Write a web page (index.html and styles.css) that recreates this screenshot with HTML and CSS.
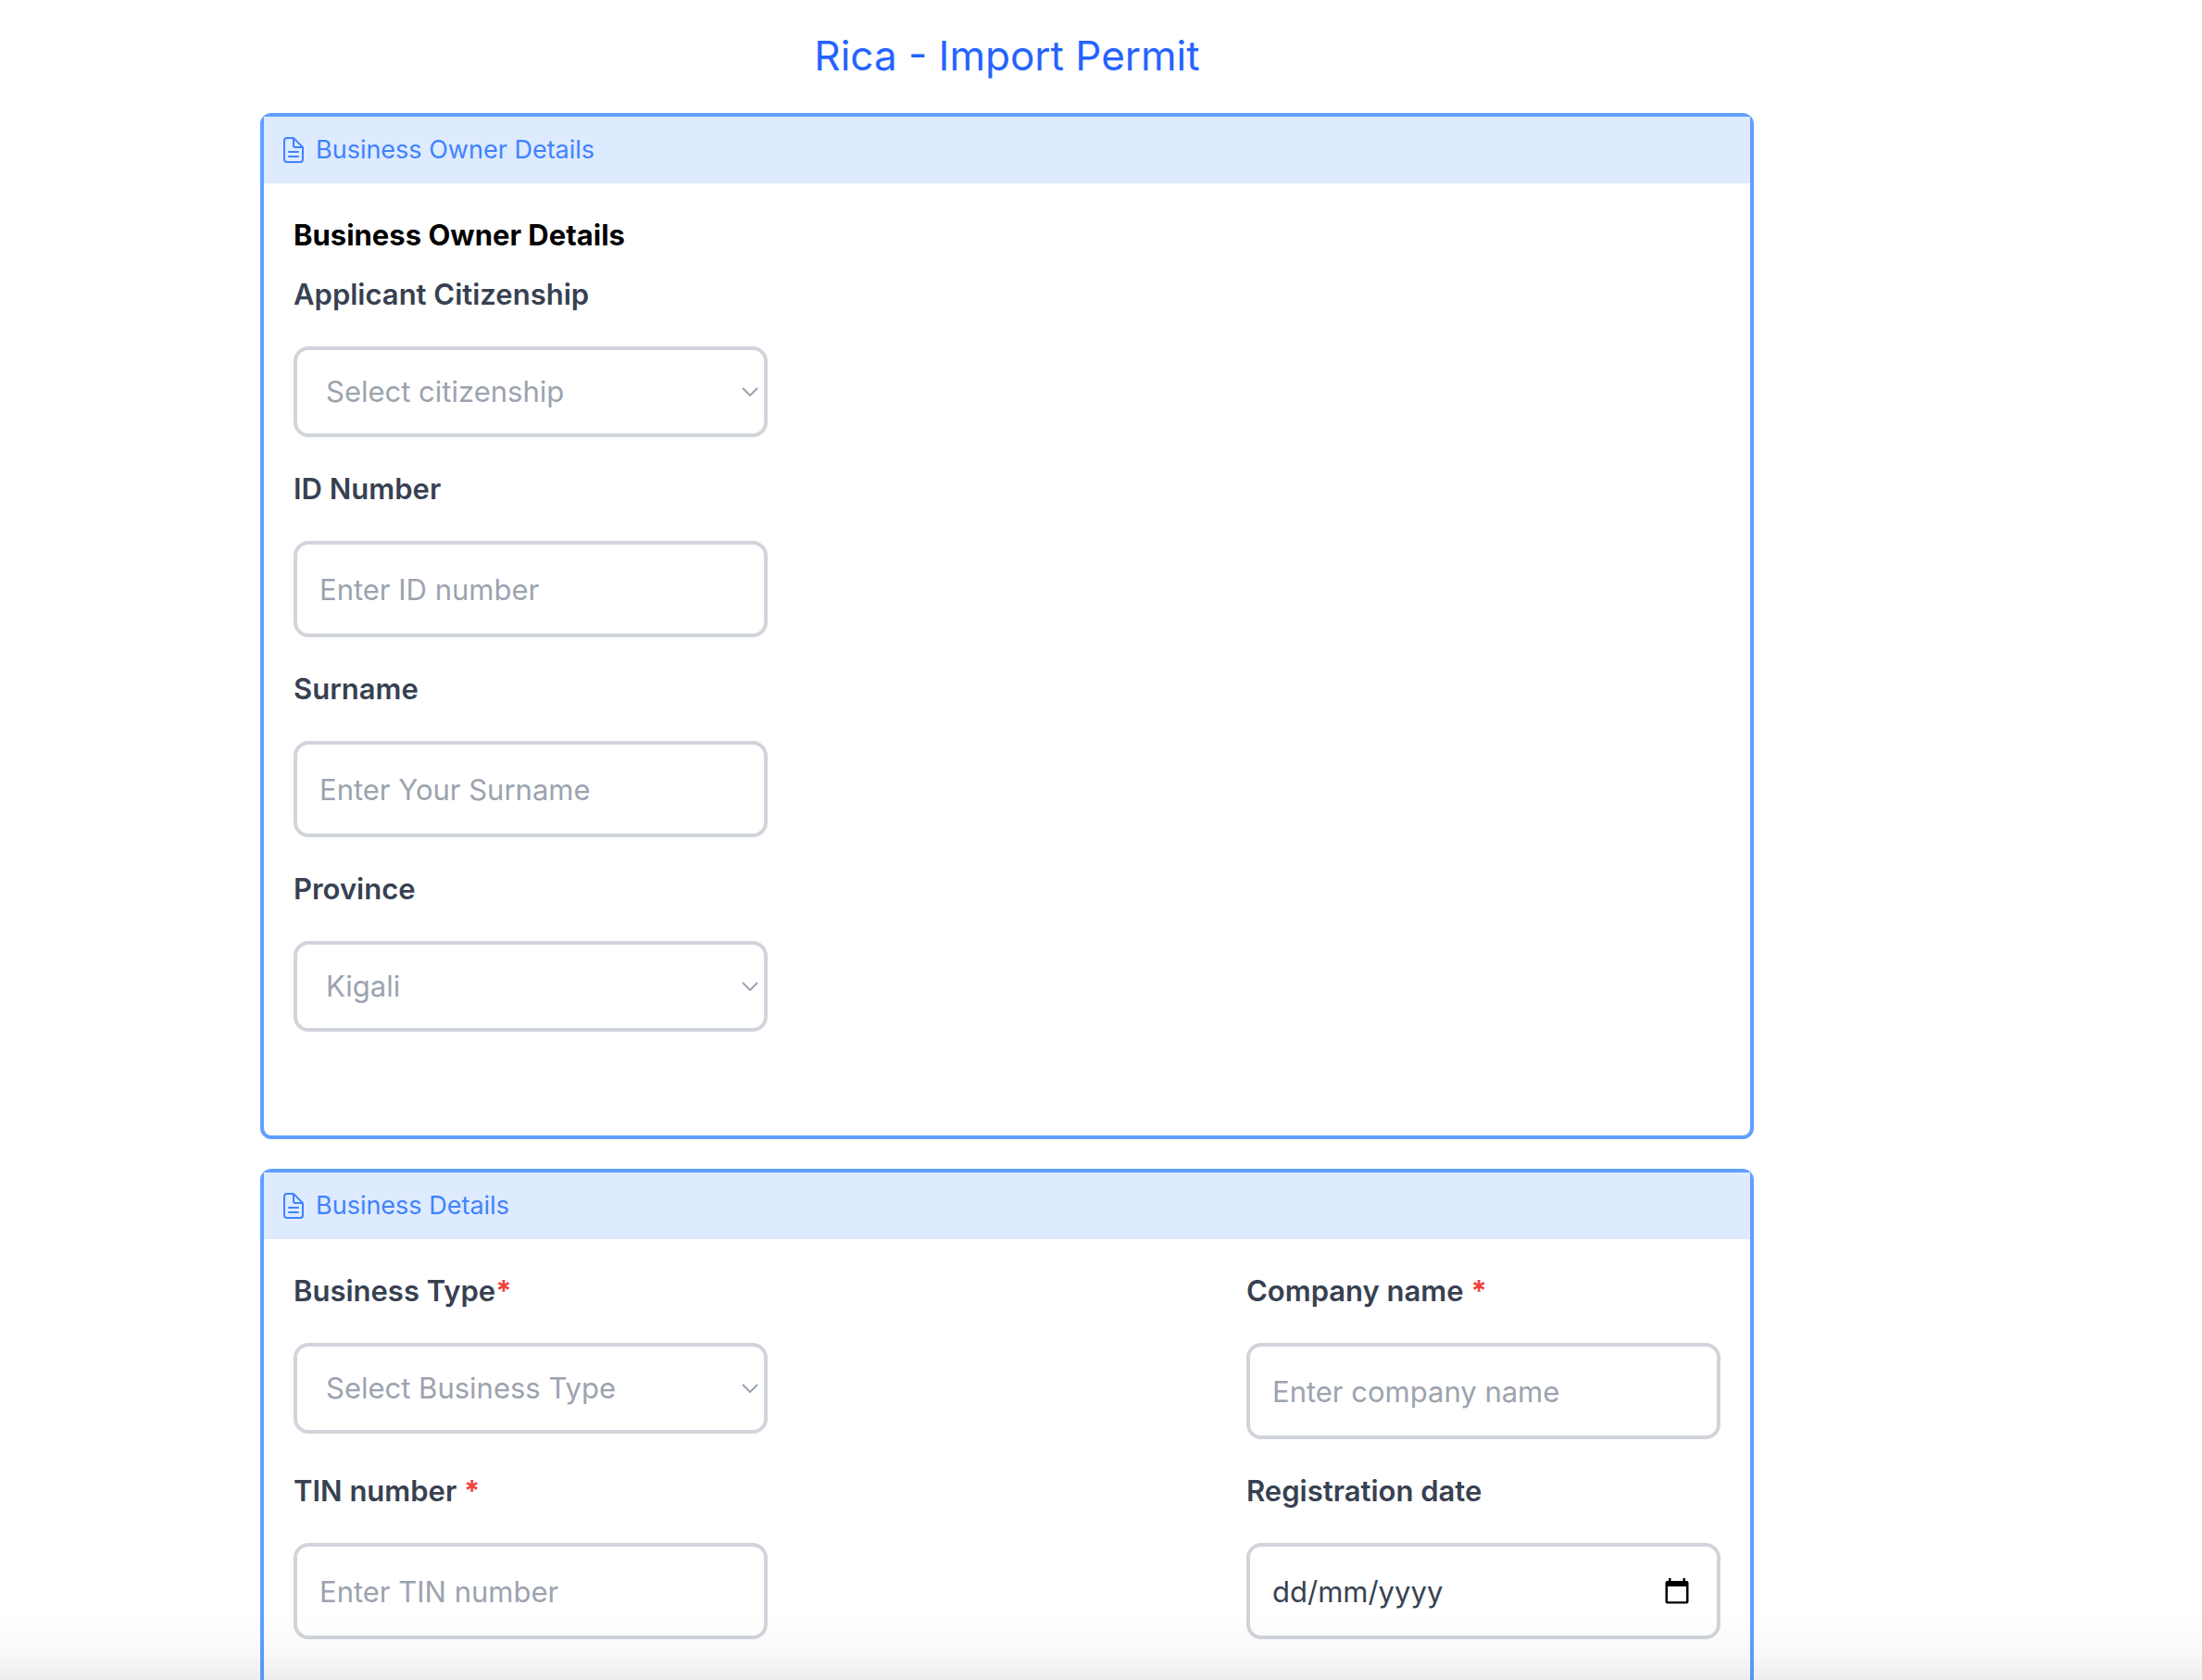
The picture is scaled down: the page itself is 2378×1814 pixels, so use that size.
FILE: index.html
```html
<!DOCTYPE html>
<html lang="en-GB">
<head>
<meta charset="utf-8">
<meta name="viewport" content="width=device-width, initial-scale=1">
<title>Rica - Import Permit</title>
<link rel="stylesheet" href="styles.css">
</head>
<body>
<main class="page">
  <h1 class="page-title">Rica - Import Permit</h1>
  <form class="permit-form">
    <section class="card">
      <header class="card-header">
        <svg class="card-icon" viewBox="0 0 512 512" aria-hidden="true"><path d="M416 221.25V416a48 48 0 01-48 48H144a48 48 0 01-48-48V96a48 48 0 0148-48h98.75a32 32 0 0122.62 9.37l141.26 141.26a32 32 0 019.37 22.62z"/><path d="M256 56v120a32 32 0 0032 32h120M176 288h160M176 368h160"/></svg>
        <span>Business Owner Details</span>
      </header>
      <div class="card-body">
        <h2 class="section-title">Business Owner Details</h2>
        <div class="fields">
          <div class="field">
            <label for="citizenship">Applicant Citizenship</label>
            <div class="select-wrap">
              <select id="citizenship" class="control"><option>Select citizenship</option></select>
              <svg class="chevron" viewBox="0 0 18 10" aria-hidden="true"><path d="M1 1l8 8 8-8"/></svg>
            </div>
          </div>
          <div class="field">
            <label for="id-number">ID Number</label>
            <input id="id-number" class="control" type="text" placeholder="Enter ID number">
          </div>
          <div class="field">
            <label for="surname">Surname</label>
            <input id="surname" class="control" type="text" placeholder="Enter Your Surname">
          </div>
          <div class="field">
            <label for="province">Province</label>
            <div class="select-wrap">
              <select id="province" class="control"><option>Kigali</option></select>
              <svg class="chevron" viewBox="0 0 18 10" aria-hidden="true"><path d="M1 1l8 8 8-8"/></svg>
            </div>
          </div>
        </div>
      </div>
    </section>

    <section class="card">
      <header class="card-header">
        <svg class="card-icon" viewBox="0 0 512 512" aria-hidden="true"><path d="M416 221.25V416a48 48 0 01-48 48H144a48 48 0 01-48-48V96a48 48 0 0148-48h98.75a32 32 0 0122.62 9.37l141.26 141.26a32 32 0 019.37 22.62z"/><path d="M256 56v120a32 32 0 0032 32h120M176 288h160M176 368h160"/></svg>
        <span>Business Details</span>
      </header>
      <div class="card-body">
        <div class="fields two-columns">
          <div class="field">
            <label for="business-type">Business Type<span class="required">*</span></label>
            <div class="select-wrap">
              <select id="business-type" class="control"><option>Select Business Type</option></select>
              <svg class="chevron" viewBox="0 0 18 10" aria-hidden="true"><path d="M1 1l8 8 8-8"/></svg>
            </div>
          </div>
          <div class="field">
            <label for="company">Company name <span class="required">*</span></label>
            <input id="company" class="control" type="text" placeholder="Enter company name">
          </div>
          <div class="field">
            <label for="tin">TIN number <span class="required">*</span></label>
            <input id="tin" class="control" type="text" placeholder="Enter TIN number">
          </div>
          <div class="field">
            <label for="registration-date">Registration date</label>
            <div class="date-wrap">
              <input id="registration-date" class="control date" type="text" inputmode="numeric" placeholder="dd/mm/yyyy">
              <button class="date-button" type="button" aria-label="Show date picker">
                <svg class="calendar" viewBox="0 0 26 28" aria-hidden="true"><path fill-rule="evenodd" d="M4 0h2.500v3h13V0H22v3h1.500a2 2 0 012 2v20.500a2 2 0 01-2 2h-21a2 2 0 01-2-2V5a2 2 0 012-2H4zM3 9v16.300h20V9z"/></svg>
              </button>
            </div>
          </div>
        </div>
      </div>
    </section>
  </form>
</main>
<div class="bottom-fade"></div>
</body>
</html>
```
FILE: styles.css
```css
*, *::before, *::after { box-sizing: border-box; }

body {
  margin: 0;
  background: #fff;
  color: #374151;
  font-family: Inter, "Liberation Sans", sans-serif;
  font-size: 31px;
  line-height: 48px;
}

.page {
  height: 100vh;
  padding: 24px 484px 32px 281px;
  overflow-y: auto;
  scrollbar-width: none;
}

.page-title {
  margin: 0 0 26px;
  color: #2563ff;
  font-size: 44px;
  font-weight: 400;
  line-height: 72px;
  text-align: center;
}

.permit-form { display: flex; flex-direction: column; gap: 32px; }

.card {
  border: 4px solid #60a0ff;
  border-radius: 12px;
  background: #fff;
}

.card-header {
  display: flex;
  align-items: center;
  gap: 8px;
  height: 72px;
  padding: 0 16px;
  background: #deeafe;
  color: #3f83ff;
  font-size: 27px;
}

.card-icon {
  width: 32px;
  height: 32px;
  fill: none;
  stroke: currentColor;
  stroke-width: 32;
  stroke-linecap: round;
  stroke-linejoin: round;
}

.card-body { padding: 32px 32px 112px; }

.section-title {
  margin: 0 0 16px;
  color: #000;
  font-size: 31px;
  font-weight: 700;
}

.fields { display: grid; gap: 32px; }
.two-columns { grid-template-columns: auto auto; justify-content: space-between; }

.field {
  display: flex;
  flex-direction: column;
  gap: 32px;
  width: 512px;
}

.field label { font-weight: 600; }
.required { color: #ef4444; font-weight: 700; }

.control {
  width: 100%;
  height: 104px;
  padding: 0 24px;
  border: 4px solid #d1d5db;
  border-radius: 16px;
  background: #fff;
  color: #374151;
  font: inherit;
}

.control::placeholder { color: #9ca3af; opacity: 1; }
.date::placeholder { color: #374151; }

.select-wrap,
.date-wrap { display: grid; align-items: center; }

.select-wrap > *,
.date-wrap > * { grid-area: 1 / 1; }

select.control {
  height: 98px;
  padding: 0 31px;
  color: #9ca3af;
  appearance: none;
}

.chevron {
  justify-self: end;
  width: 18px;
  height: 10px;
  margin-right: 10px;
  fill: none;
  stroke: #9ca3af;
  stroke-width: 2;
  pointer-events: none;
}

.date-button {
  display: flex;
  justify-self: end;
  margin-right: 28px;
  padding: 6px;
  border: 0;
  background: none;
  cursor: pointer;
}

.calendar {
  width: 26px;
  height: 28px;
  fill: #000;
}

/* Shade along the bottom edge of the window */
.bottom-fade {
  position: fixed;
  inset: auto 0 0;
  height: 72px;
  background: linear-gradient(transparent, rgba(0, 0, 0, 0.01) 35%, rgba(0, 0, 0, 0.03) 65%, rgba(0, 0, 0, 0.07));
  pointer-events: none;
}
```
